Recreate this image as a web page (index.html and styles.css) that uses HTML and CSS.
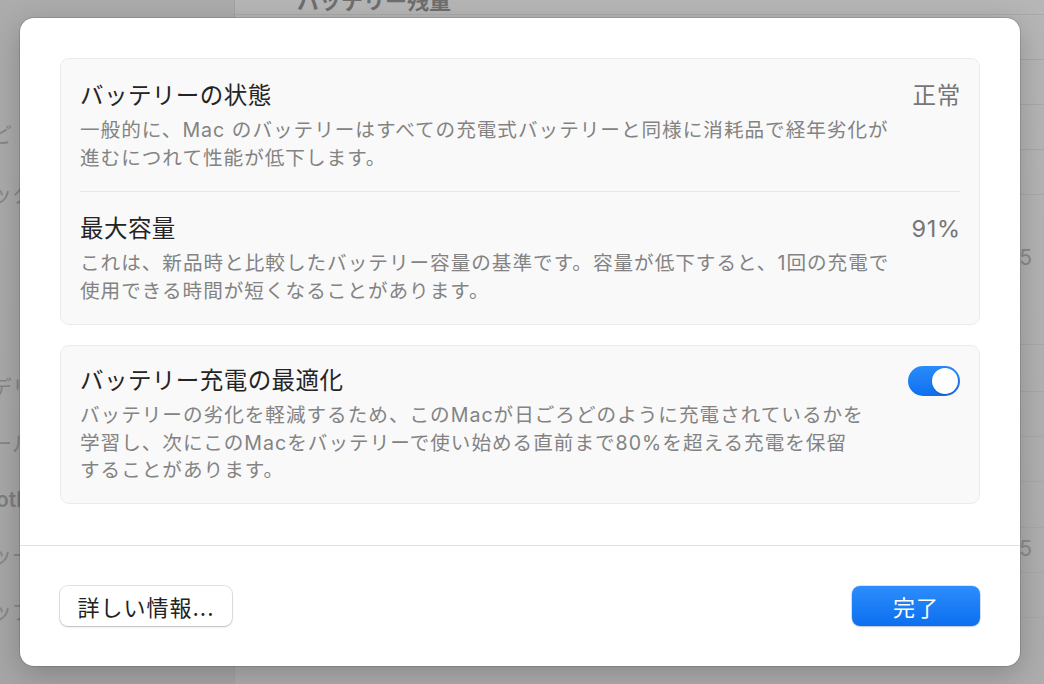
FILE: index.html
```html
<!DOCTYPE html>
<html lang="ja">
<head>
<meta charset="utf-8">
<title>バッテリーの状態</title>
<link rel="stylesheet" href="styles.css">
</head>
<body>
<div class="window">
  <aside class="sidebar">
    <div class="side-item side-first">ど</div>
    <div class="side-item">ッタ</div>
    <div class="side-gap"></div>
    <div class="side-item">デリ</div>
    <div class="side-item">ール</div>
    <div class="side-item side-latin">otl</div>
    <div class="side-item">ッー</div>
    <div class="side-item">ップ</div>
  </aside>
  <main class="content">
    <div class="content-title">バッテリー残量</div>
    <div class="row r45"></div>
    <div class="row r45"></div>
    <div class="row r45"></div>
    <div class="row r45"></div>
    <div class="row r150"><span class="num">15</span></div>
    <div class="row r47"></div>
    <div class="row r45"></div>
    <div class="row r45"></div>
    <div class="row r46"></div>
    <div class="row r45 num-row"><span class="num">15</span></div>
    <div class="row r45"></div>
  </main>
</div>

<div class="dialog">
  <div class="dialog-body">
    <section class="group">
      <div class="item">
        <div class="item-text">
          <div class="item-title">バッテリーの状態</div>
          <div class="item-desc">一般的に、Mac のバッテリーはすべての充電式バッテリーと同様に消耗品で経年劣化が<br>進むにつれて性能が低下します。</div>
        </div>
        <div class="item-value">正常</div>
      </div>
      <div class="sep"></div>
      <div class="item">
        <div class="item-text">
          <div class="item-title">最大容量</div>
          <div class="item-desc">これは、新品時と比較したバッテリー容量の基準です。容量が低下すると、1回の充電で<br>使用できる時間が短くなることがあります。</div>
        </div>
        <div class="item-value">91%</div>
      </div>
    </section>
    <section class="group group-opt">
      <div class="item">
        <div class="item-text">
          <div class="item-title">バッテリー充電の最適化</div>
          <div class="item-desc">バッテリーの劣化を軽減するため、このMacが日ごろどのように充電されているかを<br>学習し、次にこのMacをバッテリーで使い始める直前まで80%を超える充電を保留<br>することがあります。</div>
        </div>
        <div class="toggle on"><span class="knob"></span></div>
      </div>
    </section>
  </div>
  <div class="dialog-footer">
    <button class="btn btn-plain">詳しい情報...</button>
    <button class="btn btn-primary">完了</button>
  </div>
</div>
</body>
</html>
```
FILE: styles.css
```css
* { box-sizing: border-box; }
html, body { margin: 0; padding: 0; }
body {
  width: 1044px;
  height: 684px;
  overflow: hidden;
  font-family: "Inter", "Noto Sans CJK JP", sans-serif;
  position: relative;
  background: #adadad;
}

.window {
  display: flex;
  height: 684px;
}

.sidebar {
  width: 235px;
  background: linear-gradient(#acacac, #a6a6a6);
  border-right: 1px solid #a2a2a2;
  padding-top: 121px;
  color: #858585;
  font-size: 21px;
  overflow: hidden;
}
.side-item {
  height: 56px;
  line-height: 28px;
  margin-left: -9px;
  white-space: nowrap;
}
.side-first { height: 60px; }
.side-gap { height: 137px; }
.side-latin { margin-left: -4px; font-weight: 600; color: #7e7e7e; }

.content {
  flex: 1;
  background: linear-gradient(#b6b6b6, #adadad);
  overflow: hidden;
}
.content-title {
  height: 25px;
  line-height: 24px;
  margin-top: -11px;
  padding-left: 62px;
  font-size: 22px;
  font-weight: 700;
  color: #6e6e6e;
  border-bottom: 1px solid #a9a9a9;
  box-sizing: content-box;
}
.row {
  border-bottom: 1px solid #a8a8a8;
  display: flex;
  justify-content: flex-end;
  padding-right: 12px;
}
.r45 { height: 45px; }
.r46 { height: 46px; }
.r47 { height: 47px; }
.r150 { height: 150px; padding-top: 50px; }
.num-row { padding-top: 8px; }
.num {
  font-size: 21px;
  color: #8a8a8a;
  line-height: 26px;
}

/* Dialog overlay */
.dialog {
  position: absolute;
  left: 20px;
  top: 18px;
  width: 1000px;
  height: 648px;
  background: #ffffff;
  border-radius: 14px;
  box-shadow: 0 0 0 1px rgba(0,0,0,0.12), 0 8px 30px rgba(0,0,0,0.22);
  display: flex;
  flex-direction: column;
  overflow: hidden;
}
.dialog-body {
  padding: 40px 40px 41px;
  display: flex;
  flex-direction: column;
  gap: 20px;
  border-bottom: 1px solid #e3e3e3;
}
.group {
  background: #f9f9f9;
  border: 1px solid #ebebeb;
  border-radius: 9px;
  padding: 0 19px;
}
.item {
  display: flex;
  justify-content: space-between;
  align-items: flex-start;
  padding: 22px 0 19px;
}
.group-opt .item { padding: 20px 0 18px; }
.item-title {
  font-size: 23.5px;
  line-height: 30px;
  color: #242424;
  letter-spacing: 0.45px;
}
.item-desc {
  margin-top: 6px;
  font-size: 19.6px;
  line-height: 27.5px;
  color: #838383;
  white-space: nowrap;
  letter-spacing: 1px;
}
.item-value {
  font-size: 23.5px;
  line-height: 30px;
  color: #767676;
  letter-spacing: 0.8px;
  margin-right: -1px;
}
.sep {
  height: 1px;
  background: #e6e6e6;
}

.toggle {
  width: 52px;
  height: 30px;
  border-radius: 15px;
  background: linear-gradient(#2a8bfb, #0f70ef);
  position: relative;
  flex: none;
}
.knob {
  position: absolute;
  right: 2px;
  top: 2px;
  width: 26px;
  height: 26px;
  border-radius: 50%;
  background: #ffffff;
  box-shadow: 0 0.5px 2px rgba(0,0,0,0.3);
}

.dialog-footer {
  flex: 1;
  display: flex;
  justify-content: space-between;
  align-items: center;
  padding: 0 40px;
}
.btn {
  height: 40px;
  border-radius: 8px;
  font-family: "Inter", "Noto Sans CJK JP", sans-serif;
  font-size: 22px;
  border: none;
  padding: 0;
  cursor: pointer;
  letter-spacing: 1px;
}
.btn-plain {
  width: 172px;
  background: #ffffff;
  color: #222222;
  box-shadow: 0 0 0 1px rgba(0,0,0,0.1), 0 1px 2px rgba(0,0,0,0.18);
}
.btn-primary {
  width: 128px;
  color: #ffffff;
  background: linear-gradient(#2e8dfc, #0b6fef);
  box-shadow: 0 0 0 0.5px rgba(0,60,160,0.25), 0 1px 2px rgba(0,0,0,0.15);
}
```
